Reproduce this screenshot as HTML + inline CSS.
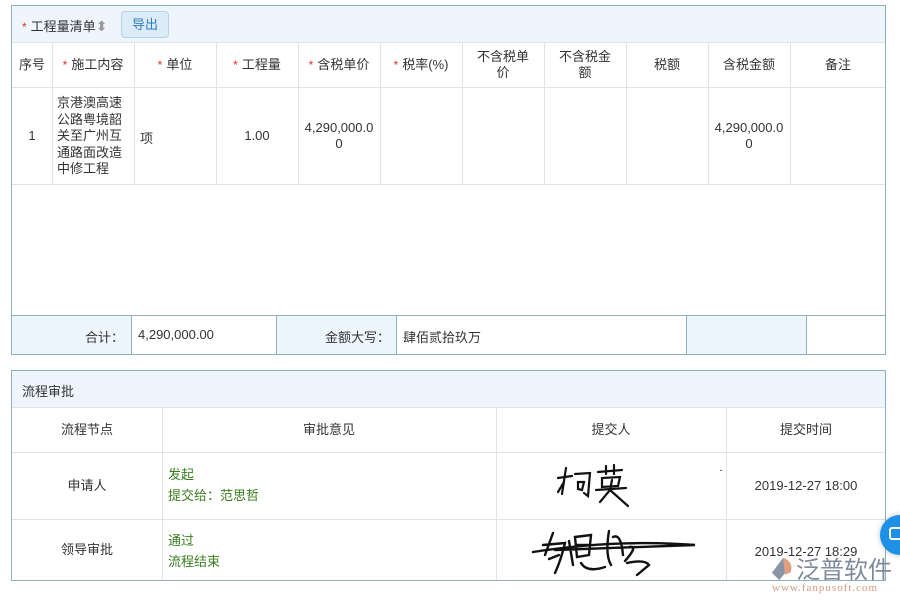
<!DOCTYPE html>
<html><head><meta charset="utf-8"><style>
*{margin:0;padding:0;box-sizing:border-box}
body{width:900px;height:600px;background:#fff;position:relative;overflow:hidden;font-family:"Liberation Sans","Noto Sans CJK SC",sans-serif;font-size:13px;color:#333}
.a{position:absolute;white-space:nowrap}
.c{position:absolute;display:flex;align-items:center;justify-content:center;text-align:center;line-height:16px}
.vl{position:absolute;width:1px;background:#e3e3e3}
.hl{position:absolute;height:1px;background:#e3e3e3}
.s{color:#d9342b;margin-right:4px;font-size:12px}
.bv{position:absolute;width:1px;background:#8fb0bd}
</style></head><body>
<div class="a" style="left:11px;top:5px;width:875px;height:350px;border:1px solid #8fb0bd;"></div>
<div class="a" style="left:12px;top:6px;width:873px;height:36px;background:#eef5fc"></div>
<div class="a" style="left:22px;top:16px;font-size:13px"><span class="s">*</span>工程量清单<span style="color:#999;font-size:14px">⬍</span></div>
<div class="a" style="left:121px;top:11px;width:48px;height:27px;border:1px solid #b7d3ea;border-radius:4px;background:#dcebf8;color:#2f7cc4;text-align:center;line-height:25px">导出</div>
<div class="hl" style="left:12px;top:42px;width:873px"></div>
<div class="hl" style="left:12px;top:87px;width:873px"></div>
<div class="hl" style="left:12px;top:184px;width:873px"></div>
<div class="vl" style="left:52px;top:42px;height:143px"></div>
<div class="vl" style="left:134px;top:42px;height:143px"></div>
<div class="vl" style="left:216px;top:42px;height:143px"></div>
<div class="vl" style="left:298px;top:42px;height:143px"></div>
<div class="vl" style="left:380px;top:42px;height:143px"></div>
<div class="vl" style="left:462px;top:42px;height:143px"></div>
<div class="vl" style="left:544px;top:42px;height:143px"></div>
<div class="vl" style="left:626px;top:42px;height:143px"></div>
<div class="vl" style="left:708px;top:42px;height:143px"></div>
<div class="vl" style="left:790px;top:42px;height:143px"></div>
<div class="c" style="left:12px;top:42px;width:40px;height:45px">序号</div>
<div class="c" style="left:52px;top:42px;width:82px;height:45px"><span class="s">*</span>施工内容</div>
<div class="c" style="left:134px;top:42px;width:82px;height:45px"><span class="s">*</span>单位</div>
<div class="c" style="left:216px;top:42px;width:82px;height:45px"><span class="s">*</span>工程量</div>
<div class="c" style="left:298px;top:42px;width:82px;height:45px"><span class="s">*</span>含税单价</div>
<div class="c" style="left:380px;top:42px;width:82px;height:45px"><span class="s">*</span>税率(%)</div>
<div class="c" style="left:462px;top:42px;width:82px;height:45px;padding:0 14px">不含税单价</div>
<div class="c" style="left:544px;top:42px;width:82px;height:45px;padding:0 14px">不含税金额</div>
<div class="c" style="left:626px;top:42px;width:82px;height:45px">税额</div>
<div class="c" style="left:708px;top:42px;width:82px;height:45px">含税金额</div>
<div class="c" style="left:790px;top:42px;width:96px;height:45px">备注</div>
<div class="c" style="left:12px;top:87px;width:40px;height:97px">1</div>
<div class="a" style="left:57px;top:95px;width:72px;line-height:16.5px;font-size:13px;white-space:normal">京港澳高速公路粤境韶关至广州互通路面改造中修工程</div>
<div class="a" style="left:140px;top:128px">项</div>
<div class="c" style="left:216px;top:87px;width:82px;height:97px">1.00</div>
<div class="c" style="left:298px;top:87px;width:82px;height:97px;padding:0 5px;word-break:break-all">4,290,000.00</div>
<div class="c" style="left:708px;top:87px;width:82px;height:97px;padding:0 5px;word-break:break-all">4,290,000.00</div>
<div class="a" style="left:12px;top:315px;width:873px;height:1px;background:#8fb0bd"></div>
<div class="a" style="left:12px;top:316px;width:119px;height:38px;background:#eef6fd"></div>
<div class="a" style="left:277px;top:316px;width:119px;height:38px;background:#eef6fd"></div>
<div class="a" style="left:687px;top:316px;width:119px;height:38px;background:#eef6fd"></div>
<div class="bv" style="left:131px;top:315px;height:39px"></div>
<div class="bv" style="left:276px;top:315px;height:39px"></div>
<div class="bv" style="left:396px;top:315px;height:39px"></div>
<div class="bv" style="left:686px;top:315px;height:39px"></div>
<div class="bv" style="left:806px;top:315px;height:39px"></div>
<div class="a" style="left:12px;top:327px;width:112px;text-align:right">合计：</div>
<div class="a" style="left:138px;top:327px">4,290,000.00</div>
<div class="a" style="left:277px;top:327px;width:113px;text-align:right">金额大写：</div>
<div class="a" style="left:403px;top:327px">肆佰贰拾玖万</div>
<div class="a" style="left:11px;top:370px;width:875px;height:211px;border:1px solid #8fb0bd;"></div>
<div class="a" style="left:12px;top:371px;width:873px;height:36px;background:#eef5fc"></div>
<div class="a" style="left:22px;top:381px">流程审批</div>
<div class="hl" style="left:12px;top:407px;width:873px"></div>
<div class="hl" style="left:12px;top:452px;width:873px"></div>
<div class="hl" style="left:12px;top:519px;width:873px"></div>
<div class="vl" style="left:162px;top:407px;height:173px"></div>
<div class="vl" style="left:496px;top:407px;height:173px"></div>
<div class="vl" style="left:726px;top:407px;height:173px"></div>
<div class="c" style="left:12px;top:407px;width:150px;height:45px">流程节点</div>
<div class="c" style="left:162px;top:407px;width:334px;height:45px">审批意见</div>
<div class="c" style="left:496px;top:407px;width:230px;height:45px">提交人</div>
<div class="c" style="left:726px;top:407px;width:160px;height:45px">提交时间</div>
<div class="c" style="left:12px;top:452px;width:150px;height:67px">申请人</div>
<div class="c" style="left:12px;top:519px;width:150px;height:61px">领导审批</div>
<div class="a" style="left:168px;top:464px;color:#3a7d1e;line-height:21px">发起<br>提交给：范思哲</div>
<div class="a" style="left:168px;top:530px;color:#3a7d1e;line-height:21px">通过<br>流程结束</div>
<div class="c" style="left:726px;top:452px;width:160px;height:67px">2019-12-27 18:00</div>
<div class="c" style="left:726px;top:519px;width:160px;height:61px;padding-top:4px">2019-12-27 18:29</div>
<svg class="a" style="left:540px;top:460px" width="100" height="50" viewBox="0 0 100 50" fill="none" stroke="#111" stroke-width="2.2" stroke-linecap="round">
<path d="M18 18 L32 16 M26 8 L22 34 M24 22 L18 32 M35 14 L50 13 L48 36 L44 33 M38 22 L44 22 L42 30 L38 29Z M58 12 L82 10 M66 6 L66 14 M74 5 L74 14 M62 18 L80 17 L78 26 L62 27Z M56 30 L86 28 M72 20 L70 30 L60 42 M70 30 L88 46"/>
</svg>
<svg class="a" style="left:525px;top:525px" width="180" height="55" viewBox="0 0 180 55" fill="none" stroke="#111" stroke-width="2.4" stroke-linecap="round">
<path d="M8 27 Q90 14 170 20 Q120 22 30 25 M28 8 L20 30 M18 20 L40 18 Q36 35 30 48 M24 34 L34 30 M44 16 L48 40 M50 12 L66 10 L64 30 L52 32Z M52 20 L64 20 M56 38 Q62 48 80 42 M84 6 Q80 30 86 40 M88 12 Q96 8 98 30 M104 22 Q114 20 100 36 M102 38 Q120 34 124 40 L112 50"/>
</svg>
<div class="a" style="left:720px;top:470px;width:2px;height:1px;background:#666"></div>
<div class="a" style="left:880px;top:515px;width:40px;height:40px;border-radius:50%;background:#1e90e6;box-shadow:0 0 6px rgba(0,0,0,.25)"></div>
<div class="a" style="left:889px;top:527px;width:16px;height:13px;border:2px solid #fff;border-radius:3px"></div>
<svg class="a" style="left:770px;top:556px" width="28" height="26" viewBox="0 0 30 28"><path d="M14 2 L2 18 L10 26 L18 16Z" fill="#8a96a8"/><path d="M14 2 Q26 6 22 18 L16 20Z" fill="#e0a080"/></svg>
<div class="a" style="left:796px;top:554px;font-size:24px;color:#7e8a9c;font-family:'Noto Sans CJK SC',sans-serif;line-height:28px">泛普软件</div>
<div class="a" style="left:772px;top:582px;font-size:11px;color:#d99a7e;font-family:'Liberation Serif',serif;letter-spacing:1px">www.fanpusoft.com</div>
</body></html>
